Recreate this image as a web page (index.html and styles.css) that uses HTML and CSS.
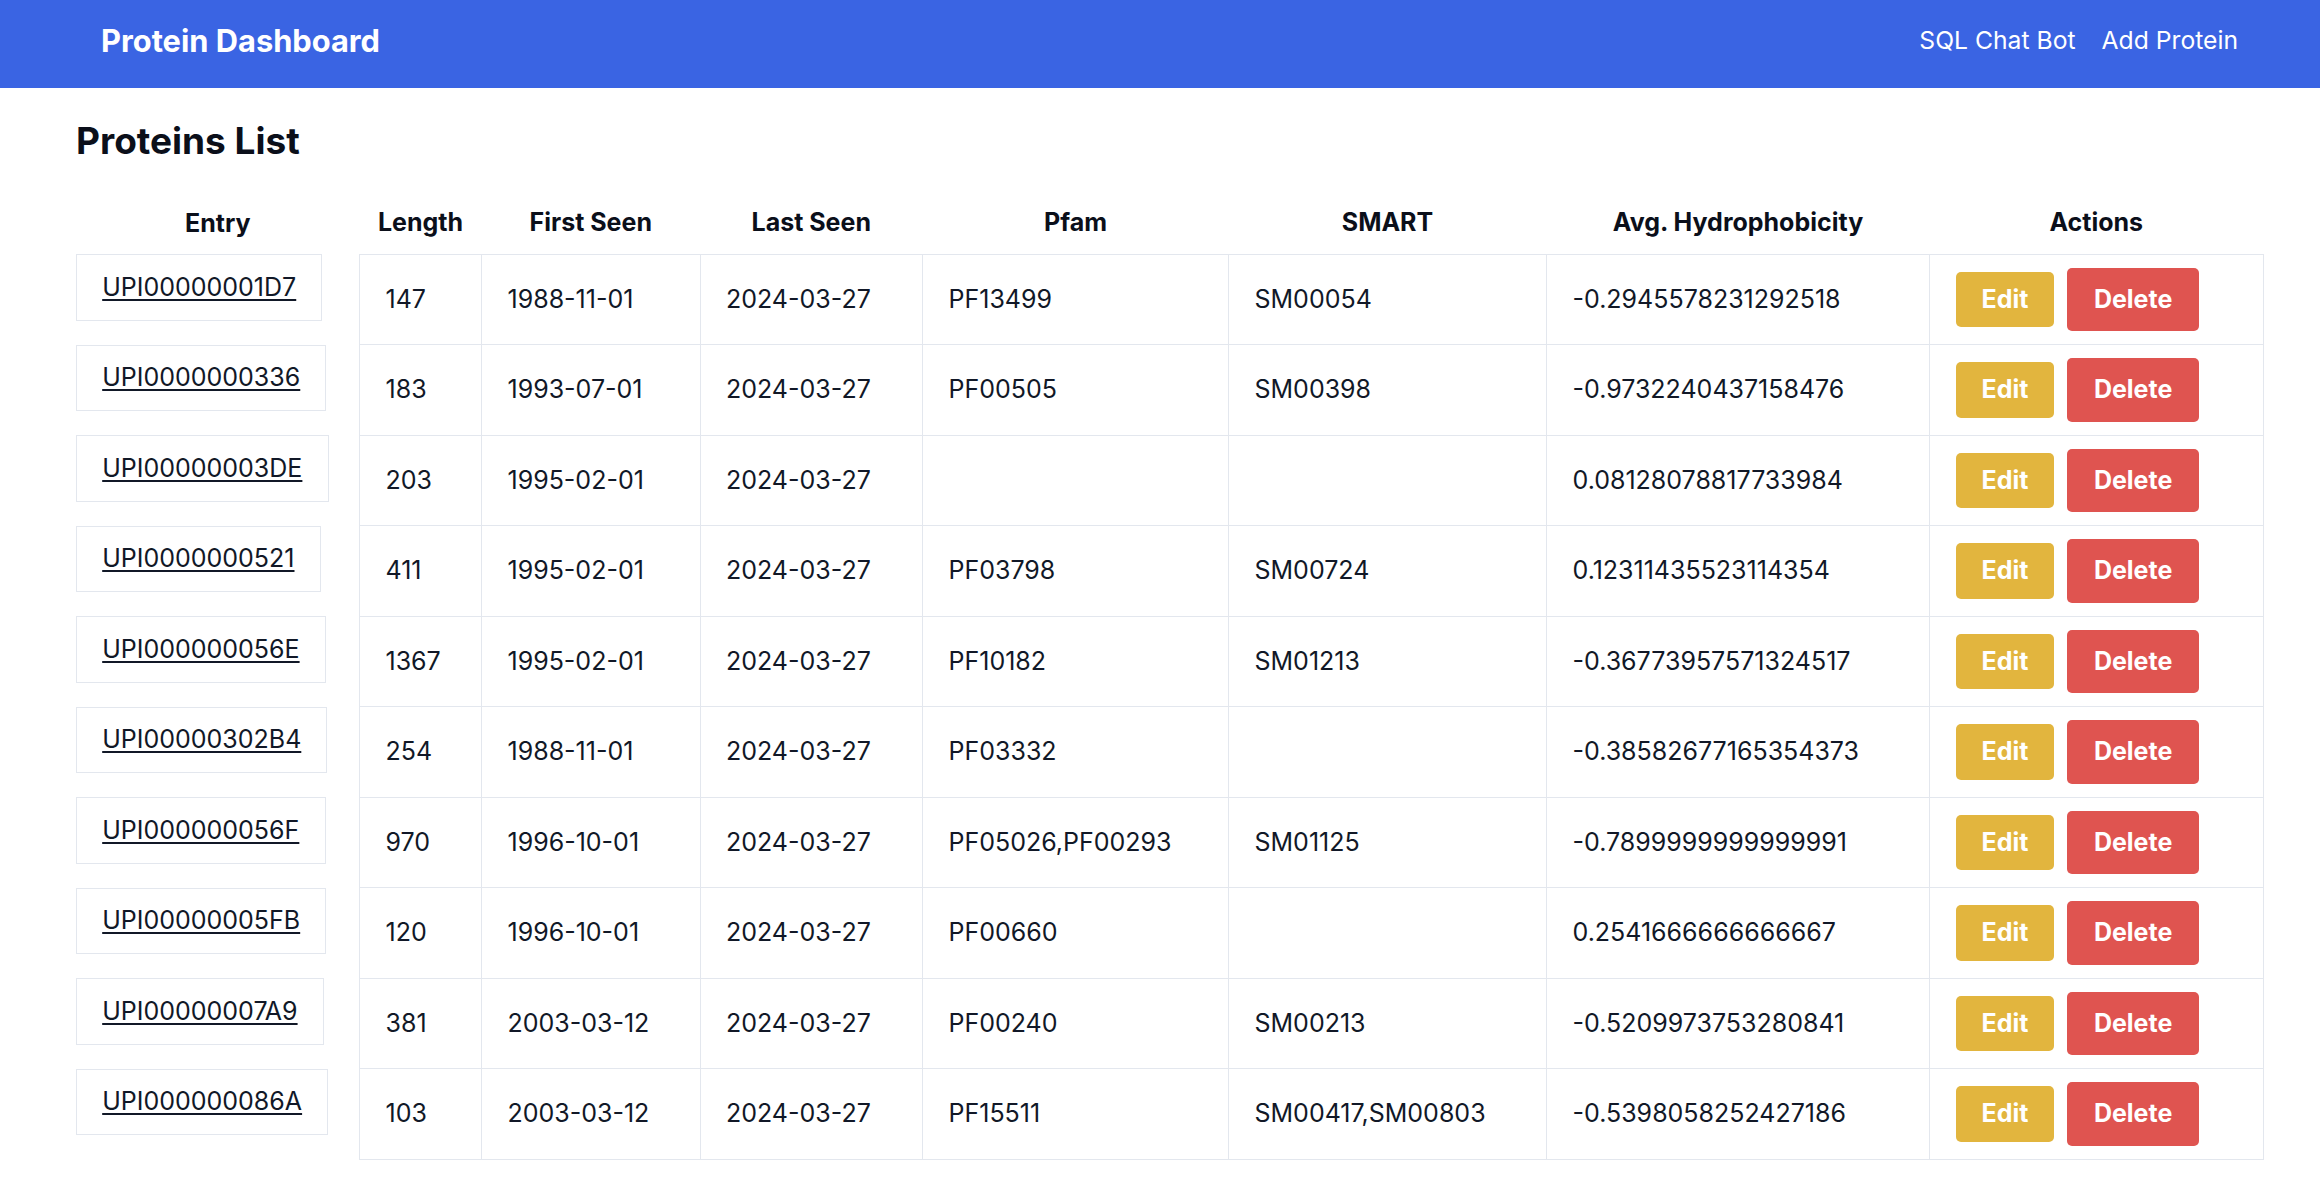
FILE: index.html
```html
<!DOCTYPE html>
<html lang="en">
<head>
<meta charset="utf-8">
<title>Protein Dashboard</title>
<link rel="stylesheet" href="styles.css">
</head>
<body>
<nav class="navbar">
  <a class="brand" href="#">Protein Dashboard</a>
  <div class="nav-links">
    <a class="nav-link" href="#">SQL Chat Bot</a>
    <a class="nav-link" href="#">Add Protein</a>
  </div>
</nav>
<main class="main">
  <h2 class="page-title">Proteins List</h2>
  <table class="proteins">
    <colgroup>
      <col class="c-entry"><col class="c-len"><col class="c-first"><col class="c-last"><col class="c-pfam"><col class="c-smart"><col class="c-avg"><col class="c-act">
    </colgroup>
    <thead>
      <tr>
        <th>Entry</th><th>Length</th><th>First Seen</th><th>Last Seen</th><th>Pfam</th><th>SMART</th><th>Avg. Hydrophobicity</th><th>Actions</th>
      </tr>
    </thead>
    <tbody>
      <tr>
        <td class="entry"><div class="entry-box"><a href="#">UPI00000001D7</a></div></td>
        <td>147</td><td>1988-11-01</td><td>2024-03-27</td><td>PF13499</td><td>SM00054</td><td>-0.2945578231292518</td>
        <td class="actions"><a class="btn btn-edit" href="#">Edit</a><button class="btn btn-delete">Delete</button></td>
      </tr>
      <tr>
        <td class="entry"><div class="entry-box"><a href="#">UPI0000000336</a></div></td>
        <td>183</td><td>1993-07-01</td><td>2024-03-27</td><td>PF00505</td><td>SM00398</td><td>-0.9732240437158476</td>
        <td class="actions"><a class="btn btn-edit" href="#">Edit</a><button class="btn btn-delete">Delete</button></td>
      </tr>
      <tr>
        <td class="entry"><div class="entry-box"><a href="#">UPI00000003DE</a></div></td>
        <td>203</td><td>1995-02-01</td><td>2024-03-27</td><td></td><td></td><td>0.08128078817733984</td>
        <td class="actions"><a class="btn btn-edit" href="#">Edit</a><button class="btn btn-delete">Delete</button></td>
      </tr>
      <tr>
        <td class="entry"><div class="entry-box"><a href="#">UPI0000000521</a></div></td>
        <td>411</td><td>1995-02-01</td><td>2024-03-27</td><td>PF03798</td><td>SM00724</td><td>0.12311435523114354</td>
        <td class="actions"><a class="btn btn-edit" href="#">Edit</a><button class="btn btn-delete">Delete</button></td>
      </tr>
      <tr>
        <td class="entry"><div class="entry-box"><a href="#">UPI000000056E</a></div></td>
        <td>1367</td><td>1995-02-01</td><td>2024-03-27</td><td>PF10182</td><td>SM01213</td><td>-0.36773957571324517</td>
        <td class="actions"><a class="btn btn-edit" href="#">Edit</a><button class="btn btn-delete">Delete</button></td>
      </tr>
      <tr>
        <td class="entry"><div class="entry-box"><a href="#">UPI00000302B4</a></div></td>
        <td>254</td><td>1988-11-01</td><td>2024-03-27</td><td>PF03332</td><td></td><td>-0.38582677165354373</td>
        <td class="actions"><a class="btn btn-edit" href="#">Edit</a><button class="btn btn-delete">Delete</button></td>
      </tr>
      <tr>
        <td class="entry"><div class="entry-box"><a href="#">UPI000000056F</a></div></td>
        <td>970</td><td>1996-10-01</td><td>2024-03-27</td><td>PF05026,PF00293</td><td>SM01125</td><td>-0.7899999999999991</td>
        <td class="actions"><a class="btn btn-edit" href="#">Edit</a><button class="btn btn-delete">Delete</button></td>
      </tr>
      <tr>
        <td class="entry"><div class="entry-box"><a href="#">UPI00000005FB</a></div></td>
        <td>120</td><td>1996-10-01</td><td>2024-03-27</td><td>PF00660</td><td></td><td>0.2541666666666667</td>
        <td class="actions"><a class="btn btn-edit" href="#">Edit</a><button class="btn btn-delete">Delete</button></td>
      </tr>
      <tr>
        <td class="entry"><div class="entry-box"><a href="#">UPI00000007A9</a></div></td>
        <td>381</td><td>2003-03-12</td><td>2024-03-27</td><td>PF00240</td><td>SM00213</td><td>-0.5209973753280841</td>
        <td class="actions"><a class="btn btn-edit" href="#">Edit</a><button class="btn btn-delete">Delete</button></td>
      </tr>
      <tr>
        <td class="entry"><div class="entry-box"><a href="#">UPI000000086A</a></div></td>
        <td>103</td><td>2003-03-12</td><td>2024-03-27</td><td>PF15511</td><td>SM00417,SM00803</td><td>-0.5398058252427186</td>
        <td class="actions"><a class="btn btn-edit" href="#">Edit</a><button class="btn btn-delete">Delete</button></td>
      </tr>
    </tbody>
  </table>
</main>
</body>
</html>
```

FILE: styles.css
```css
* { box-sizing: border-box; }

html, body {
  margin: 0;
  padding: 0;
  background: #ffffff;
}

body {
  font-family: Inter, "Noto Sans", "Liberation Sans", sans-serif;
  font-size: 25px;
  line-height: 1.5;
  color: #111827;
}

.navbar {
  height: 88px;
  background: #3a64e3;
  display: flex;
  align-items: center;
  justify-content: space-between;
  padding: 0 82px 6px 101px;
}

.brand {
  color: #ffffff;
  font-weight: 700;
  font-size: 30.8px;
  line-height: 1.2;
  text-decoration: none;
}

.nav-links {
  display: flex;
  gap: 26px;
}

.nav-link {
  color: #ffffff;
  font-size: 24.7px;
  line-height: 1.2;
  text-decoration: none;
}

.main {
  padding: 0 57px 0 76px;
}

.page-title {
  margin: 31px 0 29px;
  font-size: 37px;
  line-height: 1.2;
  font-weight: 700;
  color: #0b0f1a;
}

.proteins {
  border-collapse: collapse;
  table-layout: fixed;
  width: 2187px;
}

.c-entry { width: 283.5px; }
.c-len { width: 122px; }
.c-first { width: 218.5px; }
.c-last { width: 222.5px; }
.c-pfam { width: 306px; }
.c-smart { width: 318px; }
.c-avg { width: 383px; }
.c-act { width: 333.5px; }

.proteins th {
  font-weight: 700;
  text-align: center;
  padding: 12px 0;
  line-height: 37.5px;
  color: #0b0f1a;
}

.proteins td {
  border: 1px solid #e3e7ee;
  padding: 13px 25.5px;
  line-height: 37.5px;
  white-space: nowrap;
  vertical-align: middle;
}

.proteins td.entry {
  border: none;
  padding: 0;
  vertical-align: top;
}

.entry-box {
  display: inline-block;
  border: 1px solid #e3e7ee;
  padding: 13.4px 25.2px;
  line-height: 37.5px;
}

.entry-box a {
  color: #111827;
  text-decoration: underline;
  text-underline-offset: 3px;
}

.actions {
  font-size: 0;
}

.btn {
  display: inline-block;
  vertical-align: middle;
  font-family: Inter, "Noto Sans", "Liberation Sans", sans-serif;
  font-size: 25px;
  font-weight: 700;
  line-height: 37.5px;
  color: #ffffff;
  text-decoration: none;
  border: none;
  border-radius: 5px;
  padding: 9px 26px;
  cursor: pointer;
}

.btn-edit {
  background: #e2b53e;
  margin-right: 13px;
}

.btn-delete {
  background: #df5450;
  padding: 13px 26.5px;
}
```
